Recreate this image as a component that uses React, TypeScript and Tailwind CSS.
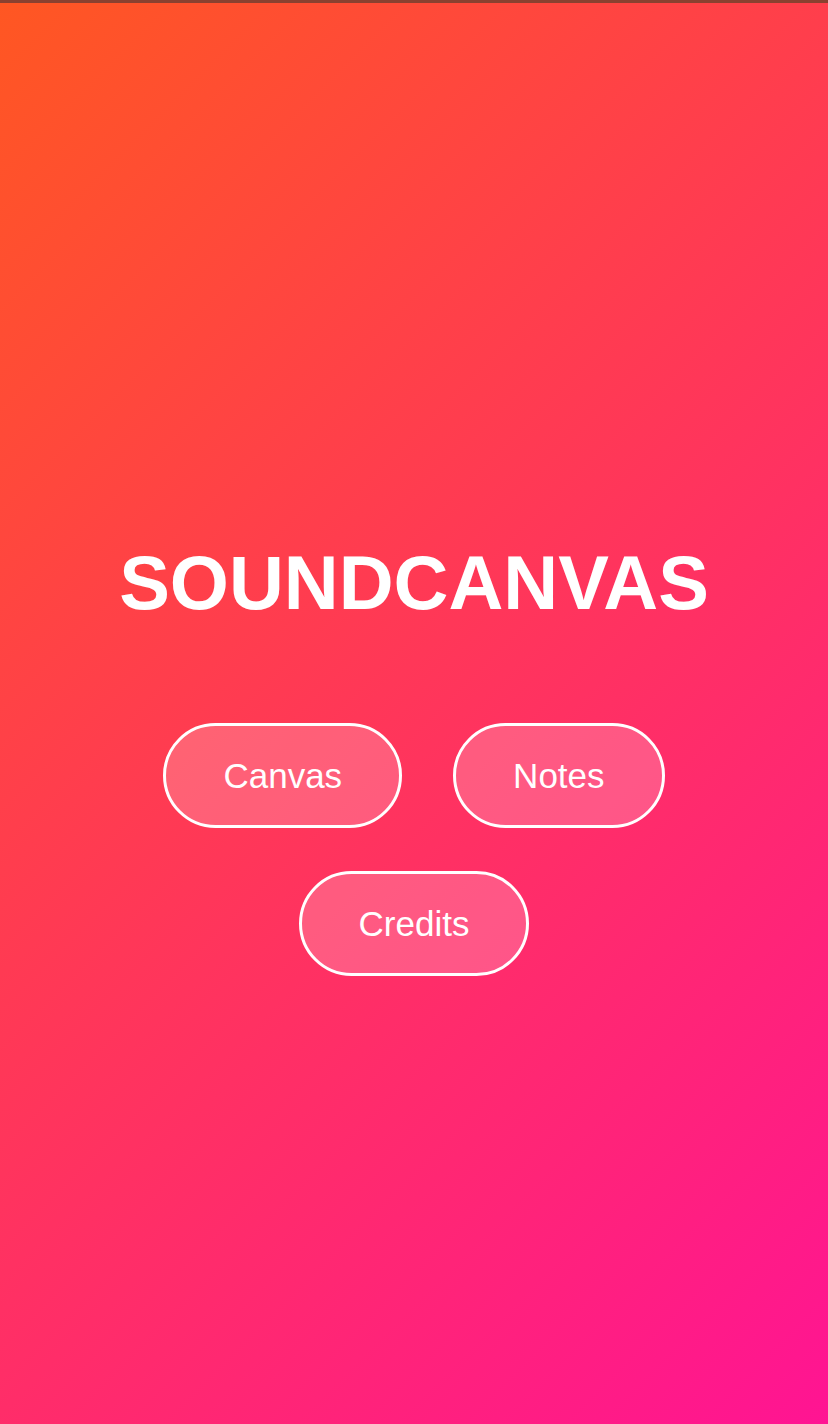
import React from "react";

function PillButton({ label }: { label: string }) {
  return (
    <button className="h-[105px] px-[57px] rounded-full border-[3px] border-white bg-white/20 text-white text-[35px] leading-none font-normal flex items-center justify-center">
      {label}
    </button>
  );
}

export default function App() {
  return (
    <div
      className="w-[828px] h-[1424px] flex flex-col overflow-hidden bg-[linear-gradient(135deg,#FF5722_0%,#FF1493_100%)]"
      style={{ fontFamily: '"Liberation Sans", Arial, sans-serif' }}
    >
      <div className="h-[3px] w-full bg-[#8a4130] shrink-0" />
      <main className="flex-1 flex flex-col items-center pt-[542px]">
        <h1 className="text-white font-bold text-[76px] leading-none tracking-[0px]">
          SOUNDCANVAS
        </h1>
        <div className="mt-[102px] flex flex-col items-center gap-[43px]">
          <div className="flex gap-[51px]">
            <PillButton label="Canvas" />
            <PillButton label="Notes" />
          </div>
          <PillButton label="Credits" />
        </div>
      </main>
    </div>
  );
}
